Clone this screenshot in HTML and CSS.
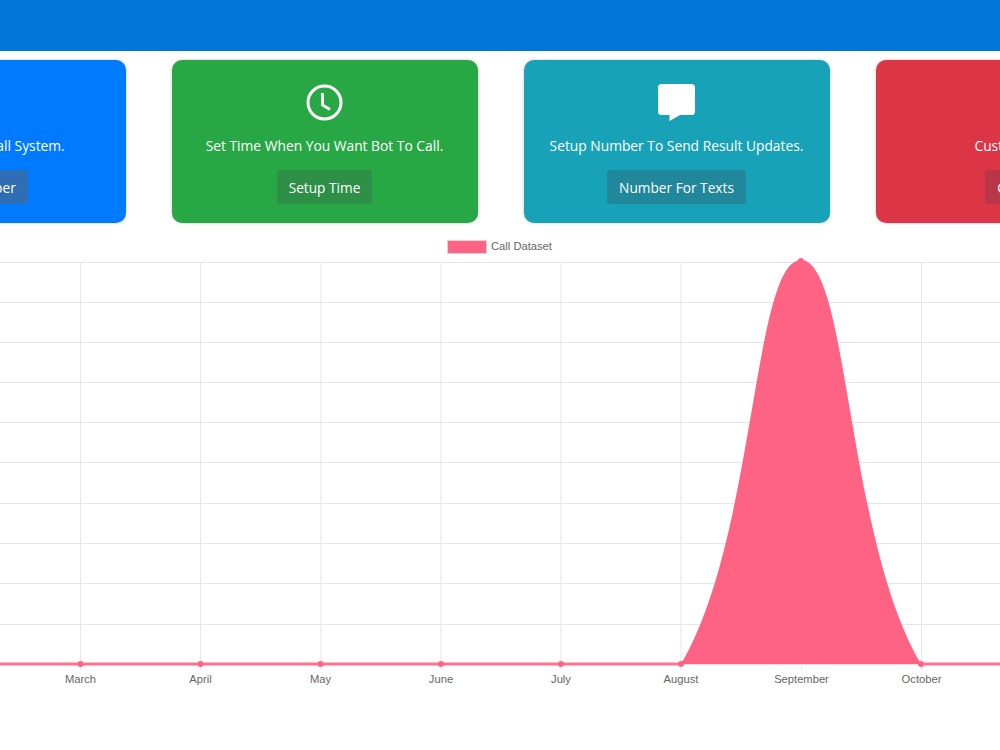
FILE: index.html
```html
<!DOCTYPE html>
<html lang="en">
<head>
    <meta charset="UTF-8">
    <title>Call Bot Dashboard</title>
    <link rel="stylesheet" href="styles.css">
</head>
<body>
    <div class="header"></div>

    <!-- Action cards, row is wider than the window -->
    <div class="cards">
        <div class="card card-blue">
            <svg class="icon" viewBox="0 0 37 37"><path d="M9 4l5 8-4 4c2 4 5 7 9 9l4-4 8 5-3 7C16 33 3 20 2 7z" fill="#fff"/></svg>
            <p>Number For Bot Call System.</p>
            <a class="btn">Your Number</a>
        </div>
        <div class="card card-green">
            <svg class="icon" viewBox="0 0 37 37">
                <circle cx="18.500" cy="18.500" r="16.500" fill="none" stroke="#fff" stroke-width="3"/>
                <path d="M16.500 9v12l7.500 4.500" fill="none" stroke="#fff" stroke-width="2.800"/>
            </svg>
            <p>Set Time When You Want Bot To Call.</p>
            <a class="btn">Setup Time</a>
        </div>
        <div class="card card-teal">
            <svg class="icon" viewBox="0 0 37 37">
                <path d="M3.500 0h30A3.500 3.500 0 0 1 37 3.500v24a3.500 3.500 0 0 1-3.500 3.500H22l-10.500 6v-6h-8A3.500 3.500 0 0 1 0 27.500v-24A3.500 3.500 0 0 1 3.500 0z" fill="#fff"/>
            </svg>
            <p>Setup Number To Send Result Updates.</p>
            <a class="btn">Number For Texts</a>
        </div>
        <div class="card card-red">
            <svg class="icon" viewBox="0 0 37 37"><circle cx="18.500" cy="18.500" r="16" fill="#fff"/></svg>
            <p>Custom Settings.</p>
            <a class="btn">Configure</a>
        </div>
    </div>

    <!-- Call chart -->
    <svg class="chart" width="1000" height="527" viewBox="0 223 1000 527">
        <rect class="legend-box" x="447.500" y="240.500" width="39" height="13"/>
        <text class="legend-text" x="491" y="250">Call Dataset</text>

        <g class="grid">
            <path d="M0 262.500H1000M0 302.500H1000M0 342.500H1000M0 382.500H1000M0 422.500H1000M0 462.500H1000M0 503.500H1000M0 543.500H1000M0 583.500H1000M0 624.500H1000M0 664.500H1000"/>
            <path d="M80.500 262V670M200.500 262V670M321 262V670M441 262V670M561 262V670M681 262V670M801.500 262V670M921.500 262V670"/>
        </g>

        <path class="area" d="M681 664C755.700 538.300 753 260 801 260C849 260 846.300 538.300 921 664Z"/>
        <path class="line" d="M0 664H681M921 664H1000"/>

        <g class="points">
            <circle cx="80.500" cy="664" r="3"/>
            <circle cx="200.500" cy="664" r="3"/>
            <circle cx="320.500" cy="664" r="3"/>
            <circle cx="441" cy="664" r="3"/>
            <circle cx="561" cy="664" r="3"/>
            <circle cx="681" cy="664" r="3"/>
            <circle cx="801" cy="261" r="3"/>
            <circle cx="921" cy="664" r="3"/>
        </g>

        <g class="labels">
            <text x="80.500" y="683">March</text>
            <text x="200.500" y="683">April</text>
            <text x="320.500" y="683">May</text>
            <text x="441" y="683">June</text>
            <text x="561" y="683">July</text>
            <text x="681" y="683">August</text>
            <text x="801.500" y="683">September</text>
            <text x="921.500" y="683">October</text>
        </g>
    </svg>
</body>
</html>
```

FILE: styles.css
```css
/* General Page Styles */
html, body {
    height: 100%;
}

body {
    font-family: 'Open Sans', 'Noto Sans', sans-serif;
    background-color: #fff;
    margin: 0;
    padding: 0;
    overflow: hidden;
}

.header {
    height: 51px;
    background-color: #0275d8;
}

/* Cards */
.cards {
    display: flex;
    justify-content: center;
    gap: 46px;
    padding-top: 9px;
    padding-left: 1px;
}

.card {
    flex: 0 0 306px;
    height: 163px;
    box-sizing: border-box;
    display: flex;
    flex-direction: column;
    align-items: center;
    padding-top: 24px;
    border-radius: 10px;
    box-shadow: 0 0 3px rgba(0, 0, 0, 0.25);
    color: #fff;
}

.card p {
    margin: 15px 0 0;
    font-size: 13.800px;
    line-height: 20px;
    white-space: nowrap;
}

.icon {
    width: 37px;
    height: 37px;
    flex: none;
}

.btn {
    display: block;
    margin-top: 14px;
    padding: 1px 12px 0;
    height: 33px;
    font-size: 13.700px;
    line-height: 33px;
    border-radius: 3px;
    white-space: nowrap;
}

.card-blue { background-color: #007bff; }
.card-blue .btn { background-color: #2f6db5; }

.card-green { background-color: #28a745; }
.card-green .btn { background-color: #2e8f47; }

.card-teal { background-color: #17a2b8; }
.card-teal .btn { background-color: #21879b; }

.card-red { background-color: #dc3545; }
.card-red .btn { background-color: #b83647; }

/* Chart */
.chart {
    display: block;
}

.grid path {
    fill: none;
    stroke: #e6e6e6;
    stroke-width: 1;
}

.area {
    fill: #ff6384;
}

.line {
    fill: none;
    stroke: #ff6384;
    stroke-width: 3;
    opacity: 0.9;
}

.points circle {
    fill: #ff6384;
}

.legend-box {
    fill: #ff6384;
    stroke: #e8d0d6;
    stroke-width: 1;
}

.legend-text, .labels text {
    font-family: 'Liberation Sans', Arial, sans-serif;
    font-size: 11.200px;
    fill: #666;
}

.labels text {
    text-anchor: middle;
}
```
